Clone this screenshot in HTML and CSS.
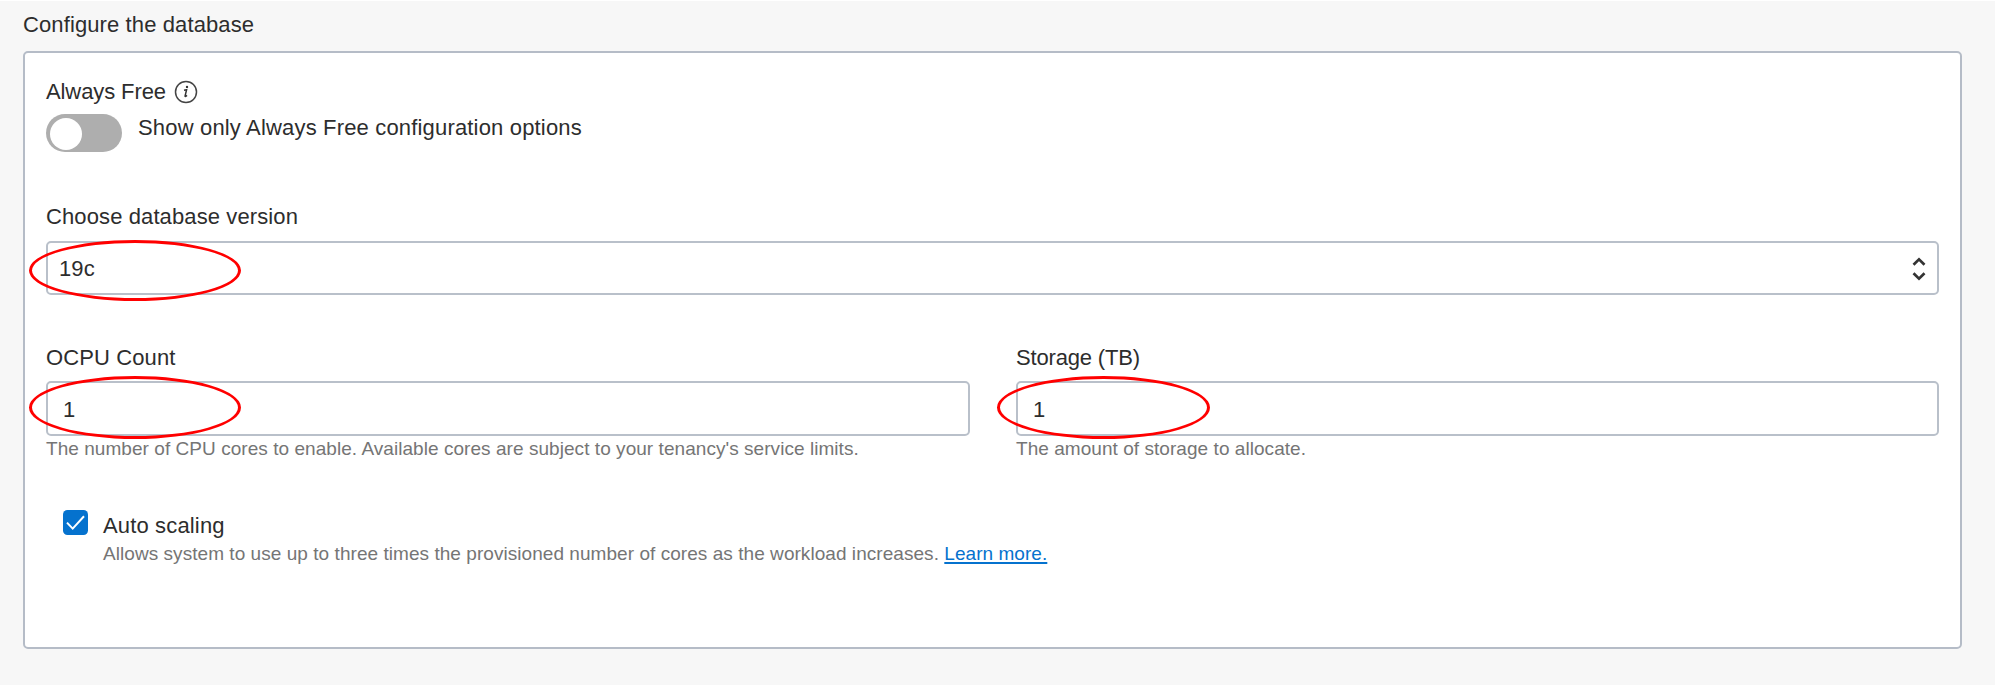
FILE: index.html
```html
<!DOCTYPE html>
<html lang="en">
<head>
<meta charset="utf-8">
<title>Configure the database</title>
<link rel="stylesheet" href="styles.css">
</head>
<body>
<main class="page">
  <h1 class="heading">Configure the database</h1>
  <section class="panel">
    <div class="free-label"><span class="free-text">Always Free</span>
      <svg class="info" viewBox="0 0 24 24" width="24" height="24" fill="none"><circle cx="12" cy="12" r="10.5" stroke="#444" stroke-width="1.5"/><path d="M10 10.200l2.600-.5-1.500 6.200c-.2.9.5.8 1.900-.5" stroke="#333" stroke-width="1.500"/><circle cx="13" cy="6.900" r="1.200" fill="#333"/></svg>
    </div>
    <div class="toggle-row">
      <span class="toggle"><span class="knob"></span></span>
      <span class="toggle-text">Show only Always Free configuration options</span>
    </div>
    <div class="field version">
      <label class="label">Choose database version</label>
      <div class="box select"><span>19c</span>
        <svg class="arrows" viewBox="0 0 14 24" width="14" height="24" fill="none" stroke="#333" stroke-width="2.700"><path d="M1.500 7.700L7 2.300l5.500 5.400M1.500 16.300L7 21.700l5.500-5.400"/></svg>
        <span class="ring ring-select"></span>
      </div>
    </div>
    <div class="columns">
      <div class="field">
        <label class="label">OCPU Count</label>
        <div class="box"><span>1</span><span class="ring"></span></div>
        <p class="hint">The number of CPU cores to enable. Available cores are subject to your tenancy's service limits.</p>
      </div>
      <div class="field">
        <label class="label label-storage">Storage (TB)</label>
        <div class="box"><span>1</span><span class="ring ring-storage"></span></div>
        <p class="hint">The amount of storage to allocate.</p>
      </div>
    </div>
    <div class="scaling">
      <svg class="check" viewBox="0 0 25 25" width="25" height="25"><rect width="25" height="25" rx="4.500" fill="#0572ce"/><path d="M4 12.600l5.700 6L21 6.300" fill="none" stroke="#fff" stroke-width="2"/></svg>
      <div>
        <div class="scaling-title">Auto scaling</div>
        <p class="hint">Allows system to use up to three times the provisioned number of cores as the workload increases. <a class="link" href="#">Learn more.</a></p>
      </div>
    </div>
  </section>
</main>
</body>
</html>
```
FILE: styles.css
```css
* { box-sizing: border-box; }
body {
  margin: 0;
  background: #f7f7f7;
  color: #2d2d2d;
  font: 22px/26px "Liberation Sans", Arial, sans-serif;
}
.page {
  height: 685px;
  padding: 11px 33px 0 23px;
  border-top: 1px solid #fff;
}
.heading { margin: 0 0 13px; font-size: 22px; font-weight: 400; line-height: 26px; letter-spacing: 0.11px; }
.panel {
  height: 598px;
  padding: 25px 21px 0;
  background: #fff;
  border: 2px solid #b5bcc7;
  border-radius: 5px;
}
.free-label { display: flex; align-items: center; gap: 8px; height: 28px; }
.free-text { letter-spacing: -0.1px; }
.info { display: block; }
.toggle-row { display: flex; gap: 16px; margin-top: 8px; height: 38px; }
.toggle { width: 76px; height: 38px; padding: 4px 4px 2px; background: #aeaeae; border-radius: 19px; }
.knob { display: block; width: 32px; height: 32px; background: #fff; border-radius: 50%; }
.toggle-text { padding-top: 1px; letter-spacing: 0.17px; }
.version { margin-top: 51px; }
.label { display: block; height: 38px; padding-top: 1px; letter-spacing: 0.11px; }
.box {
  position: relative;
  display: flex;
  align-items: center;
  height: 55px;
  padding: 2px 0 0 15px;
  border: 2px solid #b9c0ca;
  border-radius: 5px;
}
.select { justify-content: space-between; height: 54px; padding: 2px 11px 0 11px; letter-spacing: 0.1px; }
.arrows { display: block; }
.ring {
  position: absolute;
  left: -19px;
  top: -7px;
  width: 212px;
  height: 63px;
  border: 3px solid #f00;
  border-radius: 50%;
}
.ring-select { top: -3px; height: 61px; }
.ring-storage { left: -21px; width: 213px; }
.columns { display: grid; grid-template-columns: 924px 923px; gap: 46px; margin-top: 48px; }
.columns .label { padding-top: 2px; }
.columns .label-storage { letter-spacing: -0.17px; }
.hint { margin: 0; padding-top: 1px; font-size: 19px; line-height: 24px; letter-spacing: 0.05px; color: #757575; white-space: nowrap; }
.scaling { display: flex; gap: 15px; margin: 49px 0 0 17px; }
.check { display: block; flex: none; }
.scaling-title { padding-top: 3px; height: 31px; letter-spacing: 0.15px; }
.link { color: #0572ce; text-decoration-thickness: 2px; text-underline-offset: 2px; }
```
